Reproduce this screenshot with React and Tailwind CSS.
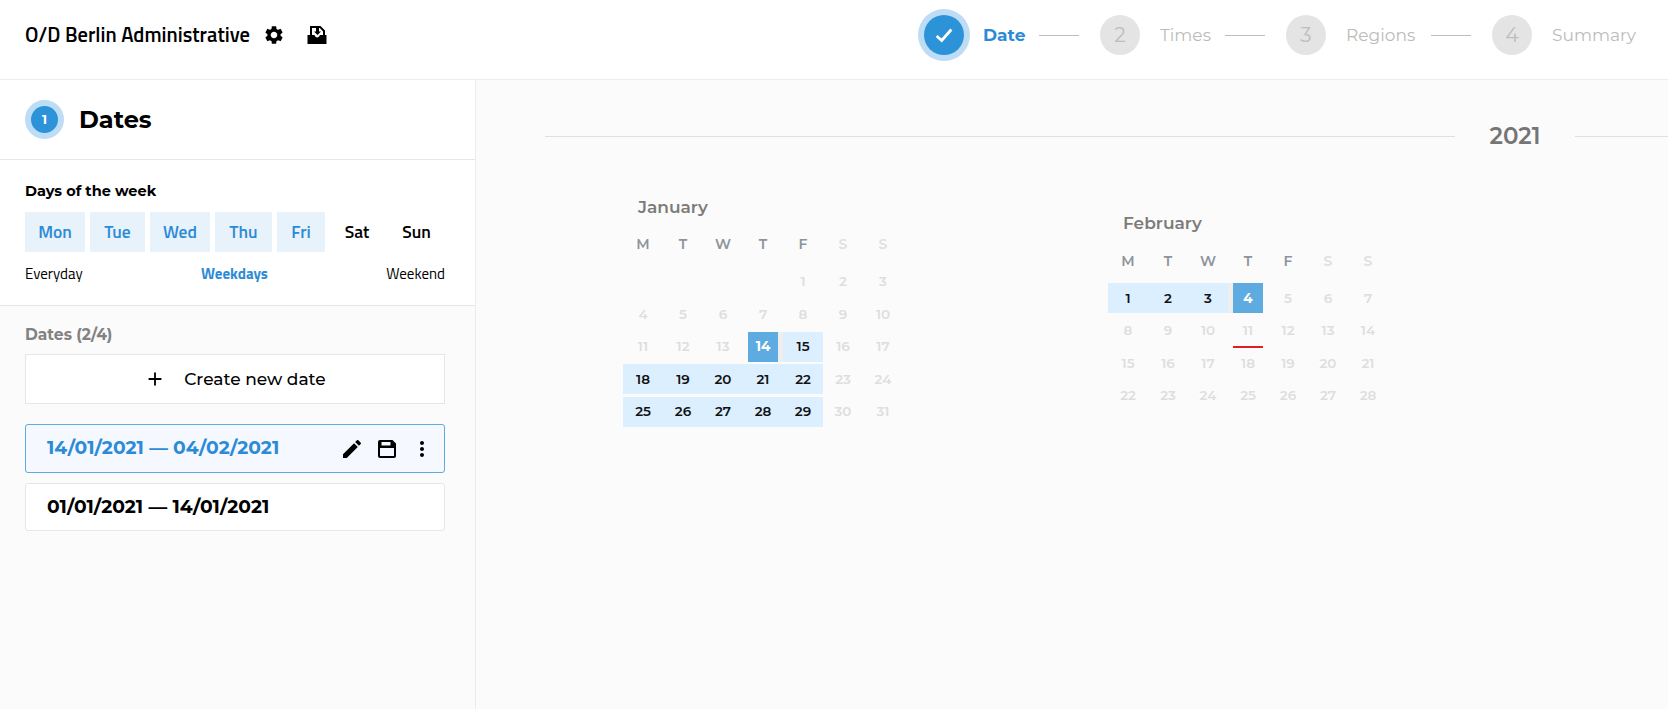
import React from "react";
import { MdSettings, MdEdit, MdMoreVert, MdAdd } from "react-icons/md";

const HEAD = "font-['Titillium_Web','Roboto','Liberation_Sans',sans-serif]";
const BODY = "font-['Montserrat','Inter','Noto_Sans',sans-serif]";

function InboxIcon({ className }) {
  return (
    <svg viewBox="0 0 24 24" width="24" height="24" className={className} fill="currentColor">
      <path fillRule="evenodd" d="M5 3h10.5L20 7.5V12h1.5v9h-19v-9H5V3zM7 5v7h2.5c.4 1.5 1.5 2.4 2.7 2.4s2.300-.9 2.700-2.400H18V8.500L14.800 5H14v3.500h2L12.500 12 9 8.500h2V5H7z" />
    </svg>
  );
}

function SaveIcon() {
  return (
    <svg viewBox="0 0 24 24" width="24" height="24" fill="currentColor">
      <path fillRule="evenodd" d="M5 3h12.500L21 6.500V19a2 2 0 0 1-2 2H5a2 2 0 0 1-2-2V5a2 2 0 0 1 2-2zM6.500 5v3.500h9V5h-9zM5 11v8h14v-8H5z" />
    </svg>
  );
}

function Step({ n, label, active, line, textCls }) {
  return (
    <div className="flex items-center">
      {active ? (
        <div className="w-[52px] h-[52px] rounded-full bg-[#bddcf5] flex items-center justify-center">
          <div className="w-10 h-10 rounded-full bg-[#2d93d8] flex items-center justify-center text-white">
            <svg viewBox="0 0 24 24" width="22" height="22" fill="none" stroke="currentColor" strokeWidth="3"><polyline points="4 13 9.500 18 20 6" /></svg>
          </div>
        </div>
      ) : (
        <div className="w-10 h-10 rounded-full bg-[#e4e4e4] flex items-center justify-center text-[#bdbdbd] text-[20px] font-normal">{n}</div>
      )}
      <span className={(active ? "ml-[13px] text-[17px] font-bold text-[#2d8bd6] pt-[2px] " : "ml-5 text-[17px] font-normal text-[#bdbbb9] pt-[2px] ") + textCls}>{label}</span>
      {line && <div className="h-px w-10 bg-[#bdbdbd] mr-[21px]" />}
    </div>
  );
}

function Month({ name, cells, labelCls, wrapCls, headCls, rowsCls }) {
  const heads = ["M", "T", "W", "T", "F", "S", "S"];
  return (
    <div className={wrapCls}>
      <div className={"text-[17px] font-semibold text-[#7d7b78] " + labelCls}>{name}</div>
      <div className={"grid grid-cols-[repeat(7,40px)] " + headCls}>
        {heads.map((h, i) => (
          <div key={i} className={"h-5 flex items-center justify-center text-[14px] font-semibold " + (i > 4 ? "text-[#e0e0e0]" : "text-[#8e939c]")}>{h}</div>
        ))}
      </div>
      <div className={"grid grid-cols-[repeat(7,40px)] auto-rows-[30px] gap-y-[2.5px] " + rowsCls}>
        {cells.map((c, i) => <Cell key={i} c={c} />)}
      </div>
    </div>
  );
}

function Cell({ c }) {
  const base = "h-[30px] flex items-center justify-center text-[13.5px] font-semibold";
  if (!c) return <div />;
  const { d, t } = c;
  if (t === "r") return <div className={base + " bg-[#dcefff] text-[#111111]"}>{d}</div>;
  if (t === "sl") return <div className="h-[30px] flex"><div className="w-[5px]" /><div className="w-[30px] bg-[#5dabe0] text-white text-[13.5px] font-bold flex items-center justify-center">{d}</div><div className="w-[5px] bg-[#eeeeee]" /></div>;
  if (t === "sr") return <div className="h-[30px] flex"><div className="w-[5px] bg-[#eeeeee]" /><div className="w-[30px] bg-[#5dabe0] text-white text-[13.5px] font-bold flex items-center justify-center">{d}</div></div>;
  if (t === "today") return <div className={base + " text-[#dedede] relative"}>{d}<div className="absolute left-[5px] bottom-[-2px] w-[30px] h-[2px] bg-[#e02020]" /></div>;
  return <div className={base + " text-[#dedede]"}>{d}</div>;
}

function build(blank, total, types) {
  const out = Array(blank).fill(null);
  for (let d = 1; d <= total; d++) out.push({ d, t: types[d] });
  return out;
}

const janTypes = { 14: "sl", 15: "r", 18: "r", 19: "r", 20: "r", 21: "r", 22: "r", 25: "r", 26: "r", 27: "r", 28: "r", 29: "r" };
const febTypes = { 1: "r", 2: "r", 3: "r", 4: "sr", 11: "today" };

export default function App() {
  const days = [
    ["Mon", "w-[60px]"], ["Tue", "w-[55px]"], ["Wed", "w-[60px]"], ["Thu", "w-[57px]"], ["Fri", "w-[48px]"],
  ];
  return (
    <div className={"w-[1668px] h-[709px] overflow-hidden flex flex-col bg-[#fbfbfb] text-black " + BODY}>
      <header className="h-20 shrink-0 bg-white border-b border-[#ececec] flex items-center justify-between pl-[25px] pr-[34px] pb-[9px]">
        <div className={"flex items-center " + HEAD}>
          <span className="text-[20.500px] font-semibold">O/D Berlin Administrative</span>
          <MdSettings size={22} className="ml-[13px]" />
          <InboxIcon className="ml-[20px]" />
        </div>
        <div className="flex items-center">
          <Step active label="Date" line textCls="w-[56px]" />
          <Step n={2} label="Times" line textCls="w-[65px]" />
          <Step n={3} label="Regions" line textCls="w-[85px]" />
          <Step n={4} label="Summary" textCls="w-[82px] whitespace-nowrap" />
        </div>
      </header>
      <div className="flex flex-1 min-h-0">
        <aside className="w-[476px] shrink-0 border-r border-[#ececec] flex flex-col">
          <div className="h-20 bg-white border-b border-[#e6e6e6] flex items-center pl-[25px]">
            <div className="w-[39px] h-[39px] rounded-full bg-[#bddcf5] flex items-center justify-center">
              <div className="w-[27px] h-[27px] rounded-full bg-[#2d93d8] text-white text-[13px] font-bold flex items-center justify-center">1</div>
            </div>
            <span className="ml-[15px] text-[24px] font-bold">Dates</span>
          </div>
          <div className="h-[146px] bg-white border-b border-[#e6e6e6] pl-[25px] pr-[30px] pt-[22px]">
            <div className="text-[14.500px] font-bold leading-[18px]">Days of the week</div>
            <div className={"flex gap-[5px] mt-[12px] text-[17.500px] font-semibold " + HEAD}>
              {days.map(([d, w]) => (
                <div key={d} className={w + " shrink-0 h-10 bg-[#e8f2fb] text-[#2d8bd6] flex items-center justify-center"}>{d}</div>
              ))}
              <div className="w-[54px] shrink-0 h-10 flex items-center justify-center">Sat</div>
              <div className="w-[55px] shrink-0 h-10 flex items-center justify-center">Sun</div>
            </div>
            <div className={"flex justify-between mt-[11px] text-[15px] " + HEAD}>
              <span>Everyday</span>
              <span className="font-bold text-[#2d8bd6]">Weekdays</span>
              <span>Weekend</span>
            </div>
          </div>
          <div className="flex-1 pl-[25px] pt-[20px] pr-[30px]">
            <div className="text-[15.500px] font-bold text-[#828282] leading-[18px]">Dates (2/4)</div>
            <button className="mt-[10px] w-full h-[50px] bg-white border border-[#e6e6e6] flex items-center justify-center text-[17px] font-medium">
              <MdAdd size={22} />
              <span className="ml-[18px] pt-[2px]">Create new date</span>
            </button>
            <div className="mt-5 h-[49px] rounded-[3px] border border-[#5dabe0] bg-[#f5f9ff] flex items-center pl-[21px] pr-[10px]">
              <span className="text-[18.700px] font-bold text-[#2d8bd6]">14/01/2021 — 04/02/2021</span>
              <div className="ml-auto flex items-center gap-[11px]">
                <MdEdit size={24} />
                <SaveIcon />
                <MdMoreVert size={24} />
              </div>
            </div>
            <div className="mt-[10px] h-[48px] rounded-[3px] border border-[#e6e6e6] bg-white flex items-center pl-[21px]">
              <span className="text-[18.700px] font-bold">01/01/2021 — 14/01/2021</span>
            </div>
          </div>
        </aside>
        <main className="flex-1 min-w-0">
          <div className="flex items-center pl-[69px] mt-[43px] h-[26px]">
            <div className="w-[910px] h-px bg-[#e0e0e0]" />
            <div className="w-[120px] text-center text-[23px] font-semibold text-[#757575]">2021</div>
            <div className="flex-1 h-px bg-[#e0e0e0]" />
          </div>
          <div className="flex items-start pl-[147px]">
            <Month name="January" cells={build(4, 31, janTypes)} labelCls="pl-[15px]" wrapCls="mt-[46px]" headCls="mt-[14px]" rowsCls="mt-[12px]" />
            <Month name="February" cells={build(0, 28, febTypes)} labelCls="pl-[15px]" wrapCls="mt-[62px] ml-[205px]" headCls="mt-[15px]" rowsCls="mt-[11.500px]" />
          </div>
        </main>
      </div>
    </div>
  );
}
